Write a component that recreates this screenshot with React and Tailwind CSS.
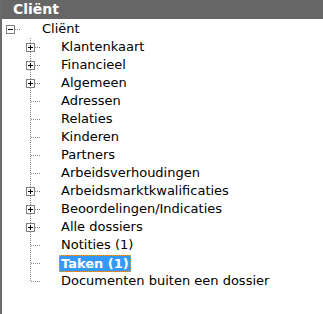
import React from "react";

const items = [
  { label: "Klantenkaart", plus: true },
  { label: "Financieel", plus: true },
  { label: "Algemeen", plus: true },
  { label: "Adressen" },
  { label: "Relaties" },
  { label: "Kinderen" },
  { label: "Partners" },
  { label: "Arbeidsverhoudingen" },
  { label: "Arbeidsmarktkwalificaties", plus: true },
  { label: "Beoordelingen/Indicaties", plus: true },
  { label: "Alle dossiers", plus: true },
  { label: "Notities (1)" },
  { label: "Taken (1)", selected: true },
  { label: "Documenten buiten een dossier" },
];

const dot = "#8a8a8a";

// little +/- box for expanders
const Expander = ({ cx, minus }) => (
  <g shapeRendering="crispEdges">
    <rect x={cx - 3.5} y="5.5" width="8" height="8" fill="#fff" stroke="#808080" />
    <line x1={cx - 2} y1="9.5" x2={cx + 3} y2="9.5" stroke="#000" />
    {!minus && <line x1={cx + 0.5} y1="7" x2={cx + 0.5} y2="12" stroke="#000" />}
  </g>
);

const Row = ({ label, plus, last, selected }) => (
  <div className="flex h-[18px] items-center">
    <svg width="57" height="18" className="shrink-0" shapeRendering="crispEdges">
      <line x1="28.5" y1="0" x2="28.5" y2={last ? 10 : 18} stroke={dot} strokeDasharray="1 1" />
      <line x1="29" y1="9.5" x2="39" y2="9.5" stroke={dot} strokeDasharray="1 1" />
      {plus && <Expander cx={28} />}
    </svg>
    <span
      className={
        selected
          ? "h-[17px] px-[1px] leading-[15px] font-bold text-white bg-[#3399ff] border border-dotted border-[#e0a040]"
          : "px-[2px] text-black"
      }
    >
      {label}
    </span>
  </div>
);

export default function App() {
  return (
    <div
      className="w-[323px] h-[314px] bg-white border-l-2 border-[#6b6b6b] text-[13px] overflow-hidden"
      style={{ fontFamily: "'DejaVu Sans', Verdana, sans-serif" }}
    >
      <div className="h-[19px] bg-[#666666] pl-[11px] text-[14px] font-bold leading-[19px] text-white">
        Cliënt
      </div>
      <div className="pt-[1px]">
        <div className="flex h-[18px] items-center">
          <svg width="40" height="18" className="shrink-0" shapeRendering="crispEdges">
            <line x1="13" y1="9.5" x2="19" y2="9.5" stroke={dot} strokeDasharray="1 1" />
            <Expander cx={8} minus />
          </svg>
          <span className="text-black">Cliënt</span>
        </div>
        {items.map((it, i) => (
          <Row key={it.label} {...it} last={i === items.length - 1} />
        ))}
      </div>
    </div>
  );
}
